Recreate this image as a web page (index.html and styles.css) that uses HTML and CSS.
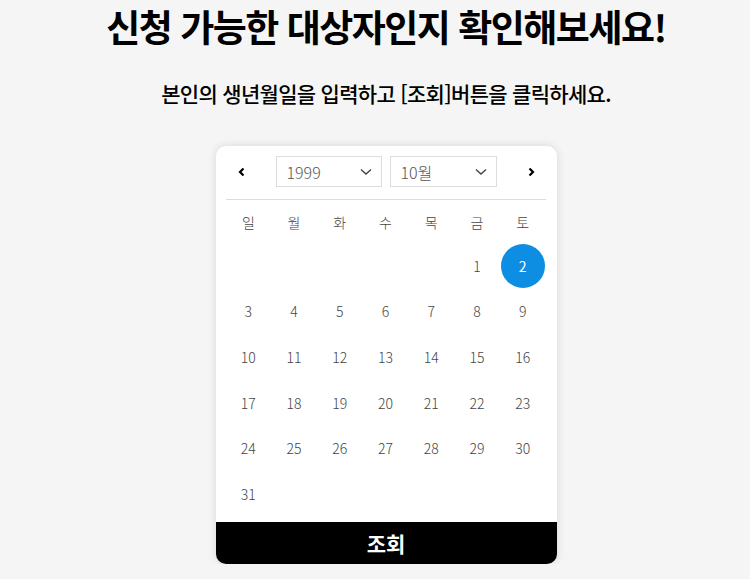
FILE: index.html
```html
<!DOCTYPE html>
<html lang="ko">
<head>
<meta charset="utf-8">
<link rel="stylesheet" href="styles.css">
</head>
<body>
<div class="page">
  <h1 class="title">신청 가능한 대상자인지 확인해보세요!</h1>
  <p class="subtitle">본인의 생년월일을 입력하고 [조회]버튼을 클릭하세요.</p>
  <div class="card">
    <div class="cal-head">
      <button class="nav" aria-label="이전 달">
        <svg width="10" height="10" viewBox="0 0 10 10"><path d="M6.5 1.5 L3 5 L6.5 8.5" fill="none" stroke="#000" stroke-width="2.2"/></svg>
      </button>
      <div class="selects">
        <div class="select year"><span>1999</span>
          <svg width="12" height="8" viewBox="0 0 12 8"><path d="M1 1.5 L6 6 L11 1.5" fill="none" stroke="#444" stroke-width="1.4"/></svg>
        </div>
        <div class="select month"><span>10월</span>
          <svg width="12" height="8" viewBox="0 0 12 8"><path d="M1 1.5 L6 6 L11 1.5" fill="none" stroke="#444" stroke-width="1.4"/></svg>
        </div>
      </div>
      <button class="nav" aria-label="다음 달">
        <svg width="10" height="10" viewBox="0 0 10 10"><path d="M3.5 1.5 L7 5 L3.5 8.5" fill="none" stroke="#000" stroke-width="2.2"/></svg>
      </button>
    </div>
    <div class="weekdays">
      <span>일</span><span>월</span><span>화</span><span>수</span><span>목</span><span>금</span><span>토</span>
    </div>
    <div class="days">
      <span></span><span></span><span></span><span></span><span></span>
      <span>1</span><span class="sel"><b>2</b></span>
      <span>3</span><span>4</span><span>5</span><span>6</span><span>7</span><span>8</span><span>9</span>
      <span>10</span><span>11</span><span>12</span><span>13</span><span>14</span><span>15</span><span>16</span>
      <span>17</span><span>18</span><span>19</span><span>20</span><span>21</span><span>22</span><span>23</span>
      <span>24</span><span>25</span><span>26</span><span>27</span><span>28</span><span>29</span><span>30</span>
      <span>31</span>
    </div>
    <button class="submit">조회</button>
  </div>
</div>
</body>
</html>
```

FILE: styles.css
```css
* { box-sizing: border-box; }
html, body { margin: 0; padding: 0; }
body {
  background: #f5f5f5;
  font-family: "Noto Sans CJK KR", "Noto Sans", sans-serif;
  color: #000;
}
.page {
  padding-left: 22px;
  display: flex;
  flex-direction: column;
  align-items: center;
}
.title {
  margin: 4px 0 0;
  font-size: 37px;
  font-weight: 700;
  letter-spacing: -1.5px;
  line-height: 44px;
}
.subtitle {
  margin: 30px 0 0;
  font-size: 21px;
  font-weight: 500;
  letter-spacing: -0.7px;
  line-height: 30px;
}
.card {
  margin-top: 38px;
  width: 341px;
  background: #fff;
  border-radius: 10px;
  box-shadow: 0 0 10px rgba(0,0,0,0.12);
  padding: 10px 11px 0;
  display: flex;
  flex-direction: column;
}
.cal-head {
  display: flex;
  justify-content: space-between;
  align-items: center;
  height: 31px;
  margin-bottom: 12px;
}
.nav {
  width: 30px;
  height: 31px;
  border: 0;
  background: none;
  padding: 0;
  display: flex;
  align-items: center;
  justify-content: center;
}
.selects {
  display: flex;
  gap: 8px;
}
.select {
  height: 31px;
  border: 1px solid #ddd;
  display: flex;
  align-items: center;
  justify-content: space-between;
  padding: 0 9px 0 10px;
  font-size: 16px;
  font-weight: 300;
  color: #555;
}
.year { width: 106px; }
.month { width: 107px; }
.weekdays {
  border-top: 1px solid #ddd;
  display: grid;
  grid-template-columns: repeat(7, 1fr);
  height: 44px;
  margin: 0 0 0 -1px;
}
.weekdays span, .days span {
  display: flex;
  align-items: center;
  justify-content: center;
  font-size: 14px;
  font-weight: 300;
  color: #444;
}
.days {
  display: grid;
  grid-template-columns: repeat(7, 1fr);
  grid-auto-rows: 45.6px;
  margin: 0 0 5px -1px;
}
.days .sel b {
  width: 44px;
  height: 44px;
  border-radius: 50%;
  background: #0d8ee2;
  color: #fff;
  font-weight: 400;
  display: flex;
  align-items: center;
  justify-content: center;
}
.submit {
  margin: 0 -11px;
  height: 42px;
  border: 0;
  background: #000;
  color: #fff;
  font-family: inherit;
  font-size: 21px;
  font-weight: 700;
  border-radius: 0 0 10px 10px;
}
```
